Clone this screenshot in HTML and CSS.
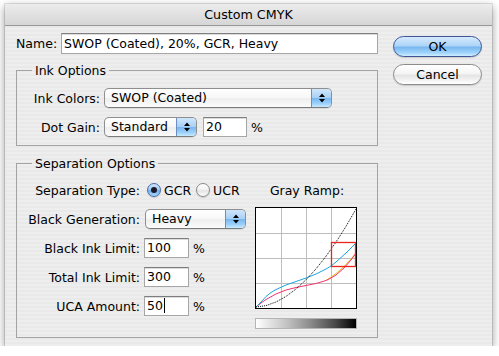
FILE: index.html
```html
<!DOCTYPE html>
<html>
<head>
<meta charset="utf-8">
<title>Custom CMYK</title>
<link rel="stylesheet" href="styles.css">
</head>
<body>
<div class="window">
  <div class="titlebar">Custom CMYK</div>
  <div class="content">
    <div class="main">
      <div class="name-row">
        <span class="name-label">Name:</span>
        <div class="field name-field">SWOP (Coated), 20%, GCR, Heavy</div>
      </div>

      <fieldset class="group ink">
        <legend>Ink Options</legend>
        <div class="ink-form">
          <span class="lbl">Ink Colors:</span>
          <div class="popup popup-ink">
            <span class="pv">SWOP (Coated)</span>
            <span class="pa"><svg width="6" height="10" viewBox="0 0 6 10"><path d="M3 0.5 L6 4 L0 4Z M0 6 L6 6 L3 9.5Z"/></svg></span>
          </div>
          <span class="lbl">Dot Gain:</span>
          <div class="ctl-row">
            <div class="popup popup-gain">
              <span class="pv">Standard</span>
              <span class="pa"><svg width="6" height="10" viewBox="0 0 6 10"><path d="M3 0.5 L6 4 L0 4Z M0 6 L6 6 L3 9.5Z"/></svg></span>
            </div>
            <div class="field num gain-field">20</div>
            <span class="pct">%</span>
          </div>
        </div>
      </fieldset>

      <fieldset class="group sep">
        <legend>Separation Options</legend>
        <div class="sep-body">
          <div class="sep-form">
            <span class="lbl">Separation Type:</span>
            <div class="radios">
              <span class="radio on"><span class="dot"></span></span><span class="rtext">GCR</span>
              <span class="radio"></span><span class="rtext">UCR</span>
            </div>

            <span class="lbl">Black Generation:</span>
            <div class="popup popup-gen">
              <span class="pv">Heavy</span>
              <span class="pa"><svg width="6" height="10" viewBox="0 0 6 10"><path d="M3 0.5 L6 4 L0 4Z M0 6 L6 6 L3 9.5Z"/></svg></span>
            </div>

            <span class="lbl">Black Ink Limit:</span>
            <div class="ctl-row"><div class="field num">100</div><span class="pct">%</span></div>

            <span class="lbl">Total Ink Limit:</span>
            <div class="ctl-row"><div class="field num">300</div><span class="pct">%</span></div>

            <span class="lbl">UCA Amount:</span>
            <div class="ctl-row"><div class="field num">50<span class="caret"></span></div><span class="pct">%</span></div>
          </div>

          <div class="ramp">
            <div class="ramp-label">Gray Ramp:</div>
            <div class="chart">
              <svg width="100" height="100" viewBox="0 0 100 100">
                <g stroke="#bdbdbd" stroke-width="1" fill="none">
                  <path d="M25.5 0 V100 M50.5 0 V100 M75.5 0 V100 M0 25.5 H100 M0 50.5 H100 M0 75.5 H100"/>
                </g>
                <polyline fill="none" stroke="#e8c21a" stroke-width="1" points="70,72.5 75,69 80,65.5 88,58.5 95,51 100,45"/>
                <polyline fill="none" stroke="#f2336f" stroke-width="1" points="0,99 5,95 10,91.5 20,86 30,82 40,79.5 50,77.5 60,75.5 70,72.5 75,70 80,67 88,60 95,52 100,45"/>
                <polyline fill="none" stroke="#19a6dc" stroke-width="1" points="0,99 5,94 10,88.5 15,84.5 20,81.5 30,77 40,73.5 50,70 60,66 70,61 75,58 80,54 90,45 100,35"/>
                <polyline fill="none" stroke="#000" stroke-width="1" stroke-dasharray="1 1" points="0,99 10,97.6 20,94 30,88.4 40,81 50,71.8 60,60.9 70,48.3 80,34.1 90,18.4 100,1"/>
                <rect x="75.5" y="34.5" width="24" height="24" fill="none" stroke="#e8261c" stroke-width="1.3"/>
              </svg>
            </div>
            <div class="gradient"></div>
          </div>
        </div>
      </fieldset>
    </div>

    <div class="side">
      <div class="btn default">OK</div>
      <div class="btn">Cancel</div>
    </div>
  </div>
</div>
</body>
</html>
```

FILE: styles.css
```css
* { box-sizing: border-box; }
html, body { margin: 0; padding: 0; background: #fff; }
body {
  font-family: "DejaVu Sans", "Noto Sans", sans-serif;
  font-size: 12.5px;
  color: #000;
}

.window {
  margin: 4px 0 0 5px;
  width: 487px;
  height: 342px;
  background: repeating-linear-gradient(to bottom, #eeeeee 0 2px, #e9e9e9 2px 4px);
  box-shadow: 0 3px 9px rgba(0,0,0,.42), 0 0 0 1px rgba(0,0,0,.1);
  display: flex;
  flex-direction: column;
}

.titlebar {
  flex: none;
  height: 22px;
  border-bottom: 1px solid #979797;
  background: linear-gradient(#ececec, #d6d6d6);
  text-align: center;
  line-height: 21px;
  font-size: 12.7px;
}

.content {
  display: flex;
  padding: 7px 11px 0 11px;
  gap: 15px;
}

.main { width: 362px; flex: none; }

.name-row { display: flex; align-items: center; }
.name-label { width: 45px; }

.field {
  background: #fff;
  border: 1px solid #a6a6a6;
  border-top-color: #7e7e7e;
  box-shadow: inset 0 1px 0 #dcdcdc;
  height: 20px;
  line-height: 18px;
  padding: 0 2px;
  white-space: nowrap;
}
.name-field { flex: 1; height: 21px; line-height: 19px; }
.num { width: 45px; }
.caret {
  display: inline-block;
  width: 1px;
  height: 15px;
  background: #000;
  vertical-align: -3px;
  margin-left: 1px;
}
.pct { margin-left: 4px; }

.group {
  border: 1px solid #a3a3a3;
  margin: 0;
  padding: 0;
  min-width: 0;
}
.group legend {
  padding: 0 3px;
  margin-left: 15px;
  line-height: 15px;
}
.ink { margin-top: 9px; }
.sep { margin-top: 10px; }

.ink-form {
  display: grid;
  grid-template-columns: 83px auto;
  column-gap: 4px;
  row-gap: 9px;
  align-items: center;
  padding: 10px 0 8px 0;
}
.lbl { text-align: right; white-space: nowrap; }

.ctl-row { display: flex; align-items: center; }
.gain-field { margin-left: 6px; width: 44px; }

.popup {
  display: flex;
  height: 20px;
  border: 1px solid #8e8e8e;
  border-bottom-color: #7a7a7a;
  border-radius: 5px;
  background: linear-gradient(#ffffff, #f7f7f7 50%, #eeeeee 51%, #fbfbfb);
  overflow: hidden;
  box-shadow: 0 1px 0 rgba(0,0,0,.08);
}
.popup .pv { flex: 1; padding-left: 6px; line-height: 18px; white-space: nowrap; }
.popup .pa {
  width: 20px;
  flex: none;
  border-left: 1px solid #6c8fc2;
  background: linear-gradient(#cfe6fc, #a9d0f5 48%, #7ab7ef 52%, #9bd0fb 80%, #c6ebff);
  display: flex;
  align-items: center;
  justify-content: center;
}
.popup-ink { width: 228px; }
.popup-gain { width: 93px; }
.popup-gen { width: 101px; }

.sep-body {
  display: flex;
  padding: 9px 0 8px 0;
}
.sep-form {
  display: grid;
  grid-template-columns: 123px auto;
  grid-auto-rows: 20px;
  column-gap: 5px;
  row-gap: 9px;
  align-items: center;
  align-content: start;
}
.sep-form .ctl-row .field { margin-left: -1px; }

.radios { display: flex; align-items: center; padding-left: 2px; }
.radio {
  width: 14px;
  height: 14px;
  border-radius: 50%;
  border: 1px solid #8a8a8a;
  background: linear-gradient(#ffffff, #f1f1f1 50%, #e4e4e4 55%, #fdfdfd);
  display: flex;
  align-items: center;
  justify-content: center;
  box-shadow: 0 1px 1px rgba(0,0,0,.15);
}
.radio.on {
  border-color: #4a6ca6;
  background: linear-gradient(#d2e8fd, #9fcaf3 48%, #6fb0ee 55%, #a9dafd);
}
.radio .dot { width: 6px; height: 6px; border-radius: 50%; background: #1c1c2a; }
.rtext { margin-left: 3px; margin-right: 5px; }

.ramp {
  margin-left: 9px;
  width: 102px;
  display: flex;
  flex-direction: column;
  align-items: stretch;
  padding-top: 3px;
}
.ramp-label { text-align: center; line-height: 15px; margin-left: 2px; }
.chart {
  margin-top: 9px;
  width: 102px;
  height: 102px;
  border: 1px solid #000;
  background: #fff;
}
.chart svg { display: block; }
.gradient {
  margin-top: 9px;
  height: 11px;
  border: 1px solid #b4b4b4;
  background: linear-gradient(90deg, #ffffff 0%, #c4c4c4 30%, #8a8a8a 55%, #454545 80%, #000000 100%);
}

.side {
  display: flex;
  flex-direction: column;
  gap: 7px;
  padding-top: 3px;
}
.btn {
  width: 89px;
  height: 21px;
  border-radius: 11px;
  border: 1px solid #8c8c8c;
  background: linear-gradient(#ffffff, #f4f4f4 48%, #e3e3e3 52%, #f6f6f6 85%, #ffffff);
  text-align: center;
  line-height: 19px;
  box-shadow: 0 1px 1px rgba(0,0,0,.15);
}
.btn.default {
  border-color: #3f5596;
  background: linear-gradient(#d6eaff, #acd3f7 48%, #76b6ef 52%, #9fd3fc 82%, #cdeeff);
}
```
